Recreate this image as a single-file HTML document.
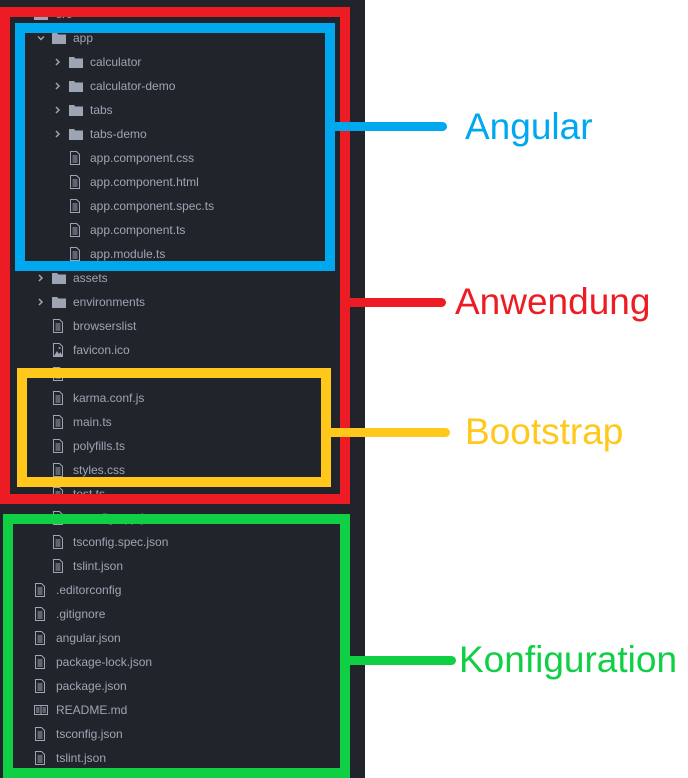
<!DOCTYPE html>
<html><head><meta charset="utf-8"><style>
body{margin:0;width:688px;height:778px;background:#fff;position:relative;overflow:hidden;font-family:"Liberation Sans",sans-serif}
#p{position:absolute;left:0;top:0;width:365px;height:778px;background:#21252b}
.r{position:absolute;height:24px;line-height:24px;font-size:12px;color:#9da5b4;white-space:nowrap}
.r svg{position:absolute;top:5px}
.b{position:absolute;box-sizing:border-box;border-width:10px;border-style:solid}
.l{position:absolute;height:9px;border-radius:0 5px 5px 0}
.t{position:absolute;font-size:37px;line-height:40px;font-family:"Liberation Sans",sans-serif}
</style></head><body>
<div id="p"></div>
<div id="rows"></div>
<script>
var F='<svg width="14" height="14" viewBox="0 0 14 14"><path d="M0 2h5l1.5 1.5H14V13H0z" fill="#9da5b4"/></svg>';
var D='<svg width="12" height="14" viewBox="0 0 12 14"><path d="M1.5 0.5h6l3 3v10h-9z" fill="none" stroke="#9da5b4"/><path d="M3.5 5h5M3.5 7h5M3.5 9h5M3.5 11h5" stroke="#9da5b4"/></svg>';
var I='<svg width="12" height="14" viewBox="0 0 12 14"><path d="M1.5 0.5h6l3 3v10h-9z" fill="none" stroke="#9da5b4"/><path d="M2 13l3-5 2 3 1.5-2 2 4z" fill="#9da5b4"/><circle cx="7.5" cy="5" r="1" fill="#9da5b4"/></svg>';
var M='<svg width="14" height="14" viewBox="0 0 14 14"><path d="M0.5 2.5h13v9h-13z M7 2.5v9" fill="none" stroke="#9da5b4"/><path d="M2 5h3.5M2 7h3.5M2 9h3.5M8.5 5h3.5M8.5 7h3.5M8.5 9h3.5" stroke="#9da5b4"/></svg>';
var RA='<svg width="8" height="14" viewBox="0 0 8 14"><path d="M2 4l3 3-3 3" fill="none" stroke="#9da5b4" stroke-width="1.5"/></svg>';
var DA='<svg width="10" height="14" viewBox="0 0 10 14"><path d="M2 5.5l3 3 3-3" fill="none" stroke="#9da5b4" stroke-width="1.5"/></svg>';
var rows=[
[1,'d','src'],[2,'do','app'],[3,'f','calculator'],[3,'f','calculator-demo'],[3,'f','tabs'],[3,'f','tabs-demo'],
[3,'D','app.component.css'],[3,'D','app.component.html'],[3,'D','app.component.spec.ts'],[3,'D','app.component.ts'],[3,'D','app.module.ts'],
[2,'f','assets'],[2,'f','environments'],[2,'D','browserslist'],[2,'I','favicon.ico'],[2,'D','index.html'],[2,'D','karma.conf.js'],[2,'D','main.ts'],[2,'D','polyfills.ts'],[2,'D','styles.css'],[2,'D','test.ts'],[2,'D','tsconfig.app.json'],[2,'D','tsconfig.spec.json'],[2,'D','tslint.json'],
[1,'D','.editorconfig'],[1,'D','.gitignore'],[1,'D','angular.json'],[1,'D','package-lock.json'],[1,'D','package.json'],[1,'M','README.md'],[1,'D','tsconfig.json'],[1,'D','tslint.json']];
var h='';
rows.forEach(function(r,i){
 var y=2+i*24, ix=r[0]==1?34:(r[0]==2?52:69), tx=r[0]==1?56:(r[0]==2?73:90);
 var ic=r[1]=='D'?D:r[1]=='I'?I:r[1]=='M'?M:F;
 var ar='';
 if(r[1]=='f')ar='<span style="position:absolute;left:'+(ix-15)+'px;top:0">'+RA+'</span>';
 if(r[1]=='do'||r[1]=='d')ar='<span style="position:absolute;left:'+(ix-16)+'px;top:0">'+DA+'</span>';
 h+='<div class="r" style="left:0;top:'+y+'px;width:365px">'+ar+'<span style="position:absolute;left:'+ix+'px;top:0">'+ic+'</span><span style="position:absolute;left:'+tx+'px">'+r[2]+'</span></div>';
});
document.getElementById('rows').innerHTML=h;
</script>
<div class="b" style="left:0;top:7px;width:350px;height:497px;border-color:#ed1c24"></div>
<div class="b" style="left:15px;top:23px;width:320px;height:248px;border-color:#00a8f0"></div>
<div class="b" style="left:17px;top:368px;width:314px;height:119px;border-color:#ffc81a"></div>
<div class="b" style="left:3px;top:514px;width:347px;height:264px;border-color:#0fcf45"></div>
<div class="l" style="left:335px;top:122px;width:112px;background:#00a8f0"></div>
<div class="l" style="left:350px;top:298px;width:96px;background:#ed1c24"></div>
<div class="l" style="left:331px;top:428px;width:119px;background:#ffc81a"></div>
<div class="l" style="left:350px;top:656px;width:106px;background:#0fcf45"></div>
<div class="t" style="left:465px;top:107px;color:#00a8f0">Angular</div>
<div class="t" style="left:455px;top:282px;color:#ed1c24">Anwendung</div>
<div class="t" style="left:465px;top:412px;color:#ffc81a">Bootstrap</div>
<div class="t" style="left:459px;top:640px;color:#0fcf45">Konfiguration</div>
</body></html>
